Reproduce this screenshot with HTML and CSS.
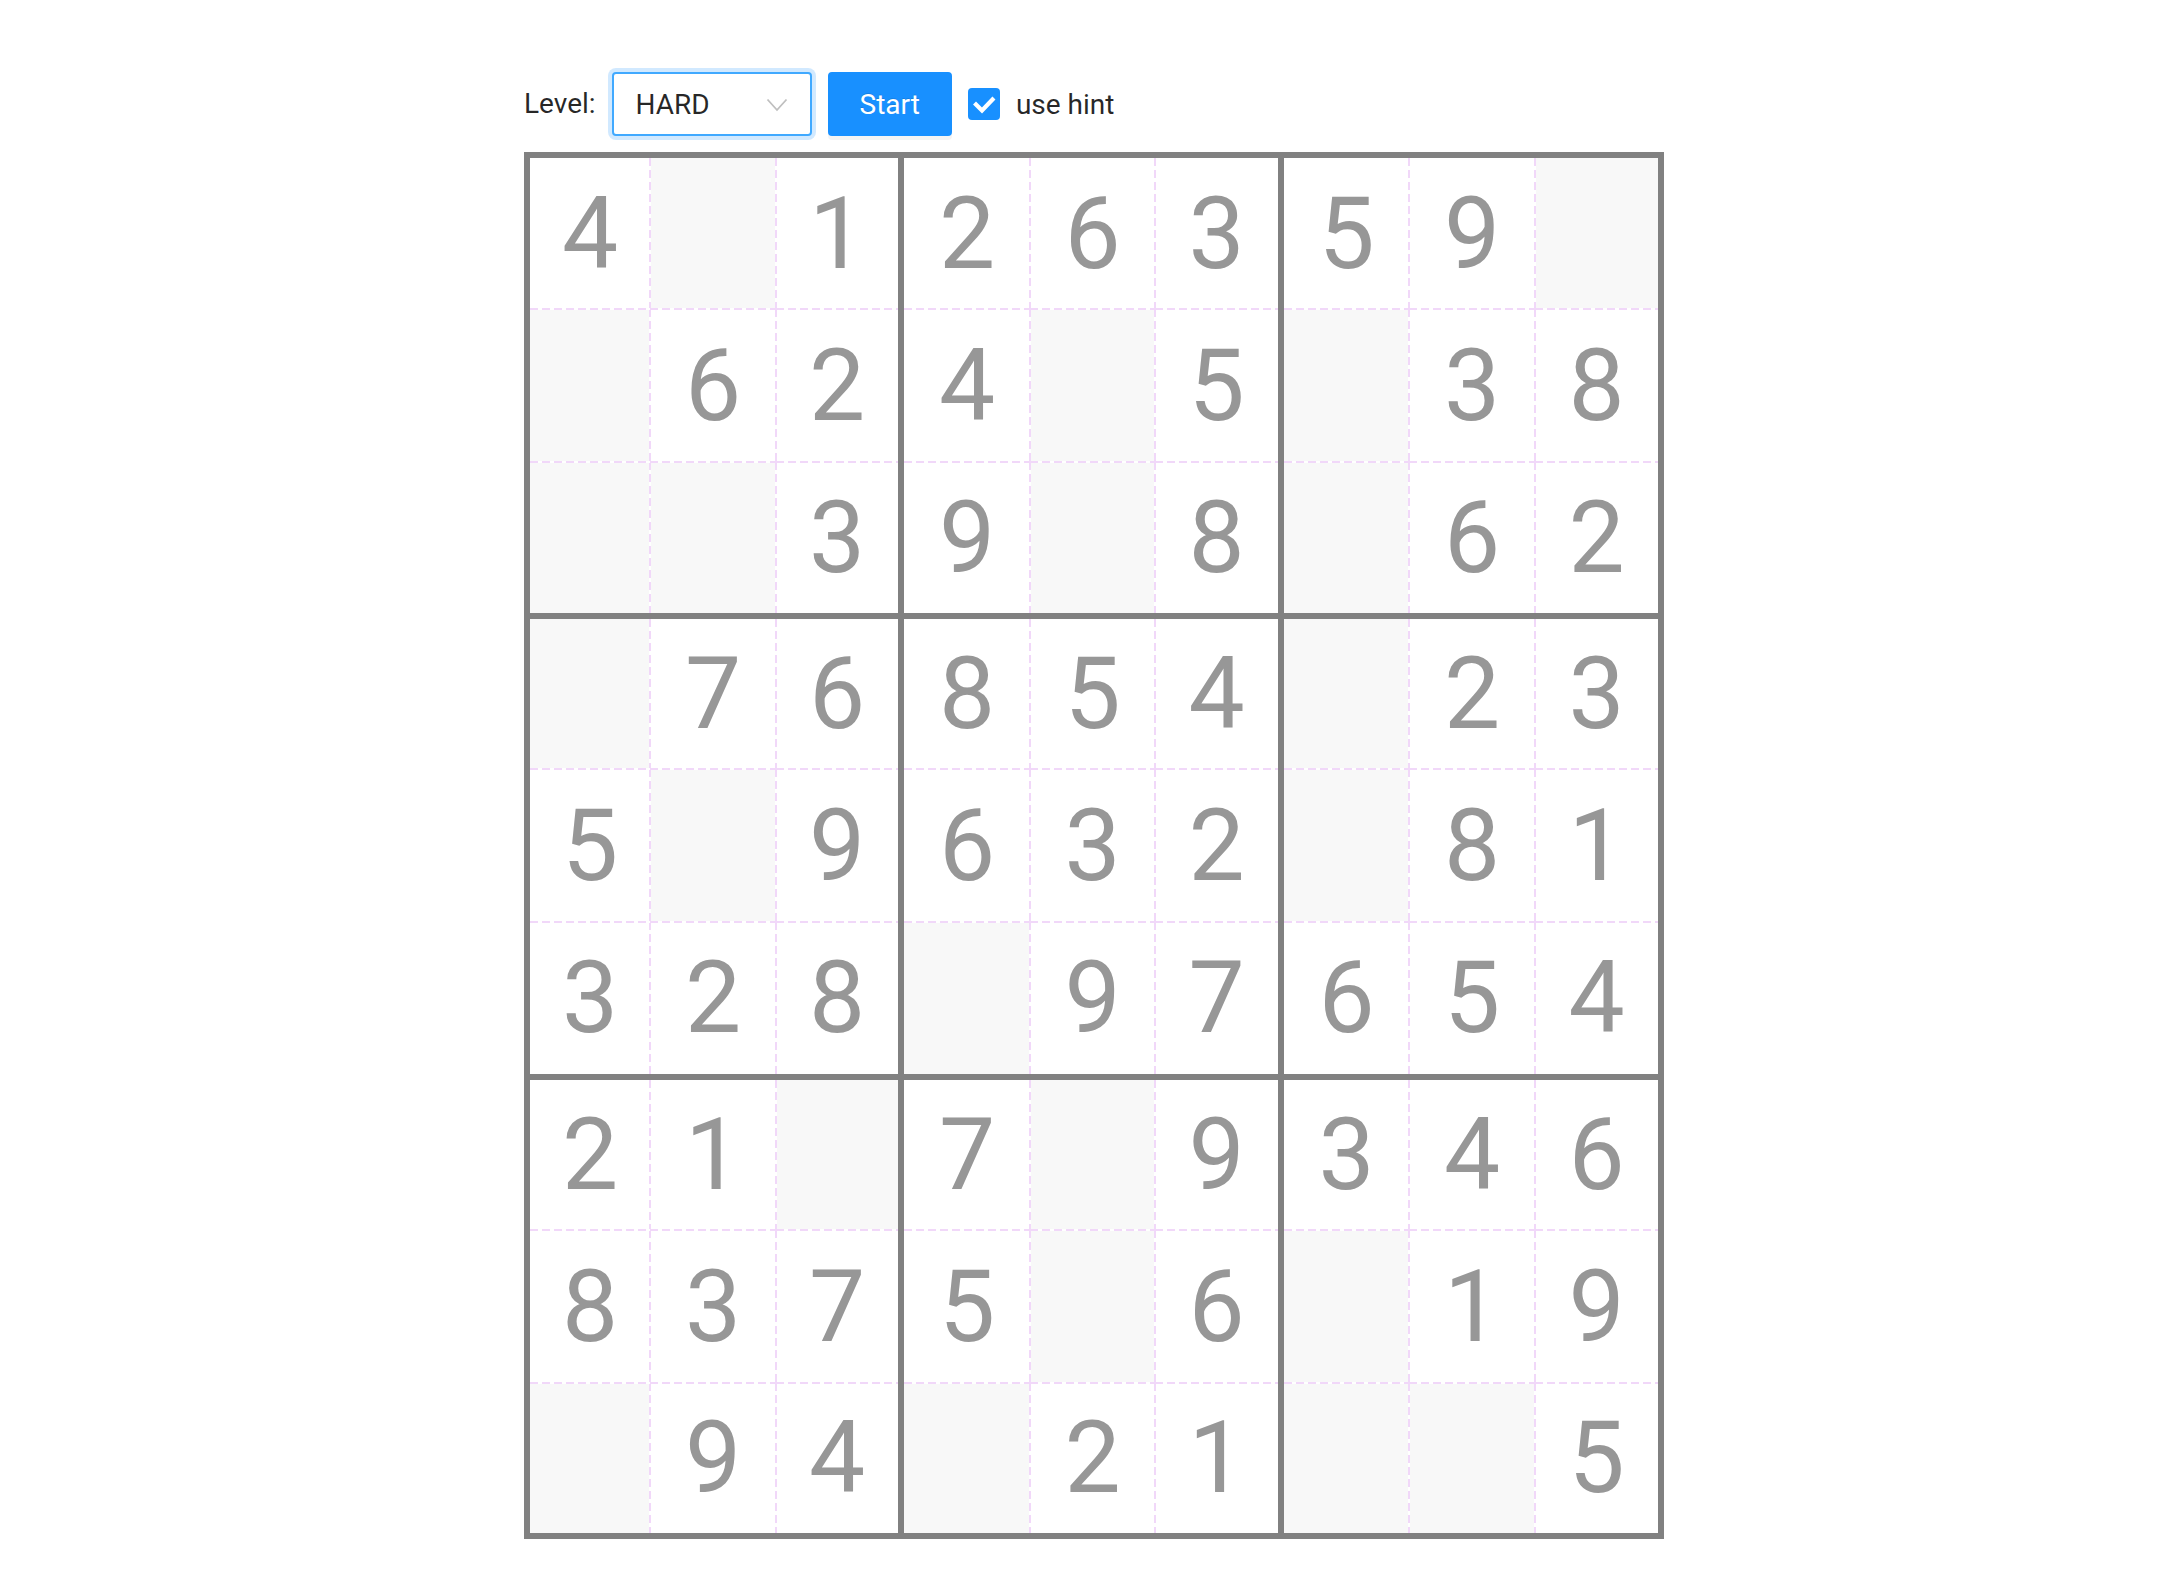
FILE: index.html
```html
<!DOCTYPE html>
<html>
<head>
<meta charset="utf-8">
<link rel="stylesheet" href="styles.css">
</head>
<body>
<div class="page">
  <div class="toolbar">
    <span class="label">Level:</span>
    <div class="select">
      <span class="select-value">HARD</span>
      <svg class="arrow" width="22" height="14" viewBox="0 0 22 14"><polyline points="1.5,1.5 11,12 20.5,1.5" fill="none" stroke="#bfbfbf" stroke-width="1.8"/></svg>
    </div>
    <button class="btn">Start</button>
    <label class="check">
      <span class="check-box"><svg width="32" height="32" viewBox="0 0 32 32"><polyline points="8,16.5 14,22.5 24.5,11.5" fill="none" stroke="#fff" stroke-width="4.2" stroke-linecap="square"/></svg></span>
      <span class="check-text">use hint</span>
    </label>
  </div>

  <div class="board">
    <div class="box">
      <div class="cell">4</div><div class="cell empty"></div><div class="cell">1</div>
      <div class="cell empty"></div><div class="cell">6</div><div class="cell">2</div>
      <div class="cell empty"></div><div class="cell empty"></div><div class="cell">3</div>
    </div>
    <div class="box">
      <div class="cell">2</div><div class="cell">6</div><div class="cell">3</div>
      <div class="cell">4</div><div class="cell empty"></div><div class="cell">5</div>
      <div class="cell">9</div><div class="cell empty"></div><div class="cell">8</div>
    </div>
    <div class="box">
      <div class="cell">5</div><div class="cell">9</div><div class="cell empty"></div>
      <div class="cell empty"></div><div class="cell">3</div><div class="cell">8</div>
      <div class="cell empty"></div><div class="cell">6</div><div class="cell">2</div>
    </div>

    <div class="box">
      <div class="cell empty"></div><div class="cell">7</div><div class="cell">6</div>
      <div class="cell">5</div><div class="cell empty"></div><div class="cell">9</div>
      <div class="cell">3</div><div class="cell">2</div><div class="cell">8</div>
    </div>
    <div class="box">
      <div class="cell">8</div><div class="cell">5</div><div class="cell">4</div>
      <div class="cell">6</div><div class="cell">3</div><div class="cell">2</div>
      <div class="cell empty"></div><div class="cell">9</div><div class="cell">7</div>
    </div>
    <div class="box">
      <div class="cell empty"></div><div class="cell">2</div><div class="cell">3</div>
      <div class="cell empty"></div><div class="cell">8</div><div class="cell">1</div>
      <div class="cell">6</div><div class="cell">5</div><div class="cell">4</div>
    </div>

    <div class="box">
      <div class="cell">2</div><div class="cell">1</div><div class="cell empty"></div>
      <div class="cell">8</div><div class="cell">3</div><div class="cell">7</div>
      <div class="cell empty"></div><div class="cell">9</div><div class="cell">4</div>
    </div>
    <div class="box">
      <div class="cell">7</div><div class="cell empty"></div><div class="cell">9</div>
      <div class="cell">5</div><div class="cell empty"></div><div class="cell">6</div>
      <div class="cell empty"></div><div class="cell">2</div><div class="cell">1</div>
    </div>
    <div class="box">
      <div class="cell">3</div><div class="cell">4</div><div class="cell">6</div>
      <div class="cell empty"></div><div class="cell">1</div><div class="cell">9</div>
      <div class="cell empty"></div><div class="cell empty"></div><div class="cell">5</div>
    </div>
  </div>
</div>
</body>
</html>
```

FILE: styles.css
```css
html, body {
  margin: 0;
  padding: 0;
  background: #ffffff;
}

body {
  font-family: Roboto, "Liberation Sans", sans-serif;
  color: rgba(0, 0, 0, 0.85);
}

.page {
  padding: 72px 0 0 524px;
}

.toolbar {
  display: flex;
  align-items: center;
  height: 64px;
  margin-bottom: 16px;
}

.label {
  font-size: 28px;
  line-height: 64px;
  margin-right: 16px;
}

.select {
  box-sizing: border-box;
  width: 200px;
  height: 64px;
  border: 2px solid #40a9ff;
  border-radius: 4px;
  box-shadow: 0 0 0 4px rgba(24, 144, 255, 0.2);
  display: flex;
  align-items: center;
  justify-content: space-between;
  padding: 0 22px 0 22px;
  margin-right: 16px;
  background: #fff;
}

.select-value {
  font-size: 28px;
  color: rgba(0, 0, 0, 0.85);
}

.arrow {
  display: block;
  margin-top: 2px;
}

.btn {
  box-sizing: border-box;
  height: 64px;
  padding: 0 30px;
  border: 2px solid #1890ff;
  border-radius: 4px;
  background: #1890ff;
  color: #fff;
  font-family: Roboto, "Liberation Sans", sans-serif;
  font-size: 28px;
  box-shadow: 0 4px 0 rgba(0, 0, 0, 0.045);
  text-shadow: 0 -1px 0 rgba(0, 0, 0, 0.12);
  margin-right: 16px;
}

.check {
  display: flex;
  align-items: center;
}

.check-box {
  width: 32px;
  height: 32px;
  border-radius: 4px;
  background: #1890ff;
  display: block;
}

.check-box svg {
  display: block;
}

.check-text {
  font-size: 28px;
  margin-left: 16px;
}

.board {
  width: 1128px;
  border: 6px solid #818181;
  background: #818181;
  display: grid;
  grid-template-columns: 368px 374px 374px;
  grid-template-rows: 455px 455px 453px;
  gap: 6px;
}

.box {
  background: #fff;
  display: grid;
  grid-template-columns: 1fr 1fr 1fr;
  grid-template-rows: 1fr 1fr 1fr;
}

.box:nth-child(3n+1) { grid-template-columns: 120px 126px 122px; }
.box:nth-child(3n+2) { grid-template-columns: 126px 125px 123px; }
.box:nth-child(3n)   { grid-template-columns: 125px 126px 123px; }

.box:nth-child(-n+3)           { grid-template-rows: 151px 153px 151px; }
.box:nth-child(n+4):nth-child(-n+6) { grid-template-rows: 150px 153px 152px; }
.box:nth-child(n+7)            { grid-template-rows: 150px 153px 150px; }

.cell {
  --t: 1px;
  --b: 1px;
  --l: 1px;
  --r: 1px;
  --dash: #f1d8f9;
  --gap: #ffffff;
  display: flex;
  align-items: center;
  justify-content: center;
  font-size: 100px;
  color: #979797;
  line-height: 1;
  background-color: #ffffff;
  background-image:
    repeating-linear-gradient(to right, var(--dash) 0 8px, var(--gap) 8px 12px),
    repeating-linear-gradient(to right, var(--dash) 0 8px, var(--gap) 8px 12px),
    repeating-linear-gradient(to bottom, var(--dash) 0 8px, var(--gap) 8px 12px),
    repeating-linear-gradient(to bottom, var(--dash) 0 8px, var(--gap) 8px 12px);
  background-size: 100% var(--t), 100% var(--b), var(--l) 100%, var(--r) 100%;
  background-position: left top, left bottom, left top, right top;
  background-repeat: no-repeat;
}

.cell:nth-child(-n+3) { --t: 0px; }
.cell:nth-child(n+7)  { --b: 0px; }
.cell:nth-child(3n+1) { --l: 0px; }
.cell:nth-child(3n)   { --r: 0px; }

.cell.empty {
  background-color: #f8f8f8;
}
```
